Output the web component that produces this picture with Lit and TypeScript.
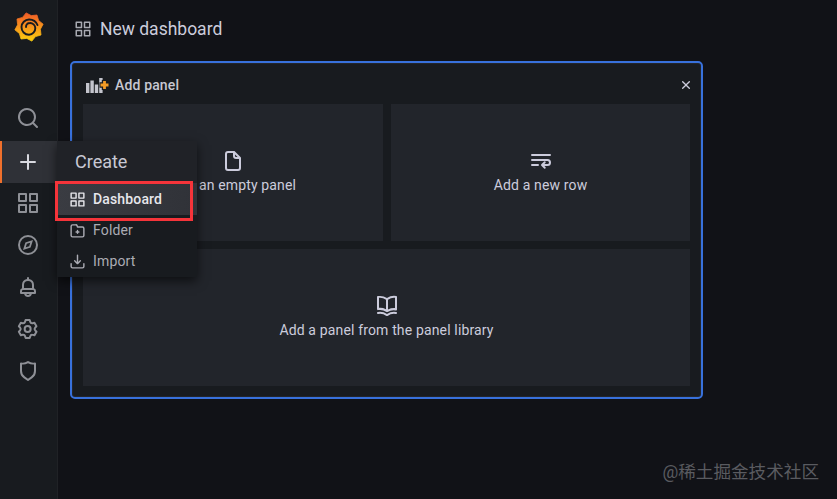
import { LitElement, html, css, svg } from "lit";
import { customElement } from "lit/decorators.js";

const P: Record<string, string> = {
  apps: "M10,13H3a1,1,0,0,0-1,1v7a1,1,0,0,0,1,1h7a1,1,0,0,0,1-1V14A1,1,0,0,0,10,13ZM9,20H4V15H9ZM21,2H14a1,1,0,0,0-1,1v7a1,1,0,0,0,1,1h7a1,1,0,0,0,1-1V3A1,1,0,0,0,21,2ZM20,9H15V4h5Zm1,4H14a1,1,0,0,0-1,1v7a1,1,0,0,0,1,1h7a1,1,0,0,0,1-1V14A1,1,0,0,0,21,13Zm-1,7H15V15h5ZM10,2H3A1,1,0,0,0,2,3v7a1,1,0,0,0,1,1h7a1,1,0,0,0,1-1V3A1,1,0,0,0,10,2ZM9,9H4V4H9Z",
  search: "M21.71,20.29,18,16.61A9,9,0,1,0,16.61,18l3.68,3.68a1,1,0,0,0,1.42,0A1,1,0,0,0,21.71,20.29ZM11,18a7,7,0,1,1,7-7A7,7,0,0,1,11,18Z",
  plus: "M19,11H13V5a1,1,0,0,0-2,0v6H5a1,1,0,0,0,0,2h6v6a1,1,0,0,0,2,0V13h6a1,1,0,0,0,0-2Z",
  compass: "M12,2A10,10,0,1,0,22,12,10,10,0,0,0,12,2Zm0,18a8,8,0,1,1,8-8A8,8,0,0,1,12,20ZM17,7,14.6,14.6,7,17,9.4,9.4ZM14.2,9.8,10.8,10.8,9.8,14.2,13.2,13.2Z",
  bell: "M18,13.18V10a6,6,0,0,0-5-5.91V3a1,1,0,0,0-2,0V4.09A6,6,0,0,0,6,10v3.18A3,3,0,0,0,4,16v2a1,1,0,0,0,1,1H8.14a4,4,0,0,0,7.72,0H19a1,1,0,0,0,1-1V16A3,3,0,0,0,18,13.18ZM8,10a4,4,0,0,1,8,0v3H8Zm4,10a2,2,0,0,1-1.72-1h3.44A2,2,0,0,1,12,20Zm6-3H6V16a1,1,0,0,1,1-1H17a1,1,0,0,1,1,1Z",
  cog: "M19.9,12.66a1,1,0,0,1,0-1.32L21.18,9.9a1,1,0,0,0,.12-1.17l-2-3.46a1,1,0,0,0-1.07-.48l-1.88.38a1,1,0,0,1-1.15-.66l-.61-1.83A1,1,0,0,0,13.64,2h-4a1,1,0,0,0-1,.68L8.08,4.51a1,1,0,0,1-1.15.66L5,4.79A1,1,0,0,0,4,5.27L2,8.73A1,1,0,0,0,2.1,9.9l1.27,1.44a1,1,0,0,1,0,1.32L2.1,14.1A1,1,0,0,0,2,15.27l2,3.46a1,1,0,0,0,1.07.48l1.88-.38a1,1,0,0,1,1.15.66l.61,1.83a1,1,0,0,0,1,.68h4a1,1,0,0,0,.95-.68l.61-1.83a1,1,0,0,1,1.15-.66l1.88.38a1,1,0,0,0,1.07-.48l2-3.46a1,1,0,0,0-.12-1.17ZM18.41,14l.8.9-1.28,2.22-1.18-.24a3,3,0,0,0-3.45,2L12.92,20H10.36L10,18.86a3,3,0,0,0-3.45-2l-1.18.24L4.07,14.89l.8-.9a3,3,0,0,0,0-4l-.8-.9L5.35,6.89l1.18.24a3,3,0,0,0,3.45-2L10.36,4h2.56l.38,1.14a3,3,0,0,0,3.45,2l1.18-.24,1.28,2.22-.8.9A3,3,0,0,0,18.41,14ZM11.64,8a4,4,0,1,0,4,4A4,4,0,0,0,11.64,8Zm0,6a2,2,0,1,1,2-2A2,2,0,0,1,11.64,14Z",
  shield: "M19.63,3.65a1,1,0,0,0-.84-.2,8,8,0,0,1-6.22-1.27,1,1,0,0,0-1.14,0A8,8,0,0,1,5.21,3.45a1,1,0,0,0-.84.2A1,1,0,0,0,4,4.43v7.45a9,9,0,0,0,3.77,7.33l3.65,2.6a1,1,0,0,0,1.16,0l3.65-2.6A9,9,0,0,0,20,11.88V4.43A1,1,0,0,0,19.63,3.65ZM18,11.88a7,7,0,0,1-2.93,5.7L12,19.77l-3.07-2.19A7,7,0,0,1,6,11.88V5.58a10,10,0,0,0,6-1.39,10,10,0,0,0,6,1.39Z",
  file: "M20,8.94a1.31,1.31,0,0,0-.06-.27l0-.09a1.07,1.07,0,0,0-.19-.28h0l-6-6h0a1.07,1.07,0,0,0-.28-.19l-.1,0A1.1,1.1,0,0,0,13.06,2H7A3,3,0,0,0,4,5V19a3,3,0,0,0,3,3H17a3,3,0,0,0,3-3V9S20,9,20,8.94ZM14,5.41,16.59,8H15a1,1,0,0,1-1-1ZM18,19a1,1,0,0,1-1,1H7a1,1,0,0,1-1-1V5A1,1,0,0,1,7,4h5V7a3,3,0,0,0,3,3h3Z",
  book: "M21.17,2.06A13.1,13.1,0,0,0,19,1.87a12.94,12.94,0,0,0-7,2.05,12.94,12.94,0,0,0-7-2,13.1,13.1,0,0,0-2.17.19,1,1,0,0,0-.83,1v12a1,1,0,0,0,1.17,1,10.9,10.9,0,0,1,8.25,1.91l.12.07.11,0a.91.91,0,0,0,.7,0l.11,0,.12-.07A10.9,10.9,0,0,1,20.83,16.4a1,1,0,0,0,1.17-1v-12A1,1,0,0,0,21.17,2.06ZM11,15.35a12.87,12.87,0,0,0-6-1.48c-.33,0-.66,0-1,0v-10a8.69,8.69,0,0,1,1,0,10.86,10.86,0,0,1,6,1.8Zm9-1.44c-.34,0-.67,0-1,0a12.87,12.87,0,0,0-6,1.48V5.67a10.86,10.86,0,0,1,6-1.8,8.69,8.69,0,0,1,1,0Zm1.17,4.15A13.1,13.1,0,0,0,19,17.87a12.94,12.94,0,0,0-7,2.05,12.94,12.94,0,0,0-7-2.05,13.1,13.1,0,0,0-2.17.19A1,1,0,0,0,2,19.21,1,1,0,0,0,3.17,20a10.9,10.9,0,0,1,8.25,1.91,1,1,0,0,0,1.16,0A10.9,10.9,0,0,1,20.83,20,1,1,0,0,0,22,19.21,1,1,0,0,0,21.17,18.06Z",
  wrap: "M3,5H21a1,1,0,0,1,0,2H3A1,1,0,0,1,3,5ZM3,10H18.5a3.5,3.5,0,0,1,0,7H15.4l1.1,1.1a1,1,0,0,1-1.4,1.4l-2.8-2.8a1,1,0,0,1,0-1.4l2.8-2.8a1,1,0,0,1,1.4,1.4L15.4,15h3.1a1.5,1.5,0,0,0,0-3H3A1,1,0,0,1,3,10ZM3,15H9a1,1,0,0,1,0,2H3a1,1,0,0,1,0-2Z",
  folder: "M19,6H12.72l-.32-1A3,3,0,0,0,9.56,3H5A3,3,0,0,0,2,6V19a3,3,0,0,0,3,3H19a3,3,0,0,0,3-3V9A3,3,0,0,0,19,6Zm1,13a1,1,0,0,1-1,1H5a1,1,0,0,1-1-1V6A1,1,0,0,1,5,5H9.56a1,1,0,0,1,.95.68L11,7.32A1,1,0,0,0,12,8h7a1,1,0,0,1,1,1Zm-6-6H13V12a1,1,0,0,0-2,0v1H10a1,1,0,0,0,0,2h1v1a1,1,0,0,0,2,0V15h1a1,1,0,0,0,0-2Z",
  import: "M21,14a1,1,0,0,0-1,1v4a1,1,0,0,1-1,1H5a1,1,0,0,1-1-1V15a1,1,0,0,0-2,0v4a3,3,0,0,0,3,3H19a3,3,0,0,0,3-3V15A1,1,0,0,0,21,14Zm-9.71,1.71a1,1,0,0,0,.33.21.94.94,0,0,0,.76,0,1,1,0,0,0,.33-.21l4-4a1,1,0,0,0-1.42-1.42L13,12.59V3a1,1,0,0,0-2,0v9.59l-2.29-2.3a1,1,0,1,0-1.42,1.42Z",
  close: "M13.41,12l4.3-4.29a1,1,0,1,0-1.42-1.42L12,10.59,7.71,6.29A1,1,0,0,0,6.29,7.71L10.59,12l-4.3,4.29a1,1,0,0,0,1.42,1.42L12,13.41l4.29,4.3a1,1,0,0,0,1.42-1.42Z",
};

const icon = (name: string, cls = "") =>
  html`<svg class="ic ${cls}" viewBox="0 0 24 24" fill="currentColor"><path d=${P[name]}></path></svg>`;

const gearPoints = () => {
  const pts: string[] = [];
  const n = 8;
  for (let i = 0; i < n * 2; i++) {
    const a = (Math.PI * 2 * i) / (n * 2) - Math.PI / 2 - 0.2;
    const r = i % 2 === 0 ? 14.4 : 11.6;
    pts.push(`${(15 + r * Math.cos(a)).toFixed(2)},${(15 + r * Math.sin(a)).toFixed(2)}`);
  }
  return pts.join(" ");
};

const logo = html`<svg class="logo" viewBox="0 0 30 30">
  <defs>
    <linearGradient id="lg" x1="0" y1="1" x2="0" y2="0">
      <stop offset="0" stop-color="#fcd00f"></stop>
      <stop offset="1" stop-color="#f05a28"></stop>
    </linearGradient>
  </defs>
  <polygon points=${gearPoints()} fill="url(#lg)" stroke="url(#lg)" stroke-width="0.8" stroke-linejoin="round"></polygon>
  ${svg`<path d="M23.5 13 A9 9 0 0 0 15 7.5 A7.8 7.8 0 0 0 7.5 15 A7.6 7.6 0 0 0 15 22.8 A6.6 6.6 0 0 0 21.3 16 A5.2 5.2 0 0 0 15.8 11 A3.8 3.8 0 0 0 12 15" fill="none" stroke="#181b1f" stroke-width="1.9" stroke-linecap="round"></path>`}
</svg>`;

const addPanelIcon = html`<svg class="addic" viewBox="0 0 24 16">
  <rect x="0" y="6" width="3.4" height="10" fill="#c4c5cd"></rect>
  <rect x="4.4" y="3.5" width="3.4" height="12.5" fill="#c4c5cd"></rect>
  <rect x="8.8" y="7.5" width="3.4" height="8.5" fill="#c4c5cd"></rect>
  <rect x="13.2" y="1" width="3.4" height="15" fill="#c4c5cd"></rect>
  <path d="M18.5 3v10M13.5 8h10" stroke="#181b1f" stroke-width="5.4"></path>
  <path d="M18.5 4v8M14.5 8h8" stroke="#f29b26" stroke-width="2.8"></path>
</svg>`;

@customElement("app-root")
export class AppRoot extends LitElement {
  static styles = css`
    :host {
      display: block;
      width: 837px;
      height: 499px;
      position: relative;
      overflow: hidden;
      font-family: Roboto, "Noto Sans CJK SC", sans-serif;
      background: #111217;
      color: #ccccdc;
    }
    .ic { display: block; }
    .root { display: flex; height: 100%; }
    .side {
      width: 57px;
      flex: none;
      border-right: 1px solid #202226;
      background: #181b1f;
      display: flex;
      flex-direction: column;
      color: #8e9096;
    }
    .logo-wrap { height: 97px; display: flex; justify-content: center; padding-top: 12px; box-sizing: border-box; }
    .logo { width: 30px; height: 30px; display: block; }
    .nav {
      height: 42px;
      display: flex;
      align-items: center;
      justify-content: center;
      padding-right: 1px;
    }
    .nav .ic { width: 24px; height: 24px; }
    .nav.active {
      box-sizing: border-box;
      padding-bottom: 1px;
      margin-bottom: -1px;
      background: #2f3137;
      color: #d8d9e0;
      position: relative;
    }
    .nav.active::before {
      content: "";
      position: absolute;
      left: 0;
      top: 0;
      bottom: 0;
      width: 2px;
      background: #f0702c;
    }
    .spacer { height: 2px; }
    .main { flex: 1; min-width: 0; padding: 0 134px 0 12px; }
    .top {
      height: 61px;
      display: flex;
      align-items: center;
      gap: 8px;
      padding: 0 0 3px 4px;
      font-size: 17.5px;
      box-sizing: border-box;
    }
    .top .ic { width: 18px; height: 18px; color: #a8a9b1; }
    .dash {
      width: 633px;
      height: 338px;
      box-sizing: border-box;
      border: 2px solid #3871dc;
      border-radius: 5px;
      background: #181b1f;
      padding: 0 12px 12px 11px;
      display: flex;
      flex-direction: column;
      box-shadow: inset 0 0 0 1px #22252b;
    }
    .dash-head {
      height: 41px;
      flex: none;
      display: flex;
      align-items: center;
      padding: 2px 0 0 3px;
      margin-right: -5px;
      box-sizing: border-box;
      font-size: 14px;
      font-weight: 500;
      letter-spacing: 0.15px;
      color: #c7c8d2;
    }
    .addic { width: 24px; height: 16px; display: block; margin-right: 5px; }
    .grow { flex: 1; }
    .close { width: 16px; height: 16px; color: #ccccdc; }
    .grid {
      flex: 1;
      display: grid;
      grid-template-columns: 300px 299px;
      grid-template-rows: 137px 137px;
      gap: 8px;
    }
    .tile {
      background: #22252b;
      display: flex;
      flex-direction: column;
      align-items: center;
      justify-content: center;
      box-sizing: border-box;
      padding-bottom: 1px;
      font-size: 14px;
      line-height: 21px;
      letter-spacing: 0.15px;
      color: #ccccdc;
      gap: 2px;
    }
    .tile .ic { width: 24px; height: 24px; }
    .wide { grid-column: 1 / 3; }
    .menu {
      position: absolute;
      left: 57px;
      top: 141px;
      width: 140px;
      height: 136px;
      background: #181b1f;
      box-shadow: 0 4px 10px rgba(0, 0, 0, 0.6);
      display: flex;
      flex-direction: column;
    }
    .menu-h {
      height: 42px;
      box-sizing: border-box;
      display: flex;
      align-items: center;
      padding: 0 0 2px 18px;
      font-size: 18px;
      color: #c8c9d4;
      background: #202227;
    }
    .menu-i {
      height: 31px;
      box-sizing: border-box;
      display: flex;
      align-items: center;
      gap: 7px;
      padding: 0 0 1px 12px;
      font-size: 14px;
      letter-spacing: 0.15px;
      color: #abacb4;
    }
    .menu-i .ic { width: 17px; height: 17px; }
    .menu-i.hot {
      height: 32px;
      padding-bottom: 0;
      background: linear-gradient(90deg, #3a3c42, #303238);
      color: #e7e7ec;
      font-weight: 500;
    }
    .redbox {
      position: absolute;
      left: 55px;
      top: 181px;
      width: 138px;
      height: 40px;
      box-sizing: border-box;
      border: 3px solid #f5343a;
      pointer-events: none;
    }
    .mark {
      position: absolute;
      right: 18px;
      top: 461px;
      font-size: 17.6px;
      line-height: 22px;
      color: #5a5b60;
    }
  `;

  render() {
    return html`
      <div class="root">
        <aside class="side">
          <div class="logo-wrap">${logo}</div>
          <div class="nav">${icon("search")}</div>
          <div class="spacer"></div>
          <div class="nav active">${icon("plus")}</div>
          <div class="nav">${icon("apps")}</div>
          <div class="nav">${icon("compass")}</div>
          <div class="nav">${icon("bell")}</div>
          <div class="nav">${icon("cog")}</div>
          <div class="nav">${icon("shield")}</div>
        </aside>
        <main class="main">
          <div class="top">${icon("apps")}<span>New dashboard</span></div>
          <section class="dash">
            <div class="dash-head">
              ${addPanelIcon}<span>Add panel</span><span class="grow"></span>${icon("close", "close")}
            </div>
            <div class="grid">
              <div class="tile">${icon("file")}<span>Add an empty panel</span></div>
              <div class="tile">${icon("wrap")}<span>Add a new row</span></div>
              <div class="tile wide">${icon("book")}<span>Add a panel from the panel library</span></div>
            </div>
          </section>
        </main>
      </div>
      <nav class="menu">
        <div class="menu-h">Create</div>
        <div class="menu-i hot">${icon("apps")}<span>Dashboard</span></div>
        <div class="menu-i">${icon("folder")}<span>Folder</span></div>
        <div class="menu-i">${icon("import")}<span>Import</span></div>
      </nav>
      <div class="redbox"></div>
      <div class="mark">@稀土掘金技术社区</div>
    `;
  }
}
